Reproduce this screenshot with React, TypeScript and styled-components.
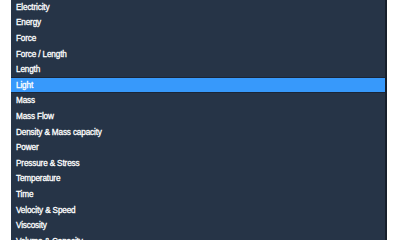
import styled, { createGlobalStyle } from "styled-components";

const GlobalStyle = createGlobalStyle`
  html, body {
    margin: 0;
    padding: 0;
    background: #ffffff;
    overflow: hidden;
  }
`;

const Page = styled.div`
  width: 400px;
  height: 240px;
  padding-left: 11px;
  box-sizing: border-box;
  display: flex;
  overflow: hidden;
`;

const ListPanel = styled.ul`
  list-style: none;
  margin: -1px 0 0;
  padding: 0;
  width: 376px;
  height: 242px;
  background: #263447;
  border-right: 2px solid #161f2b;
  box-sizing: border-box;
  overflow: hidden;
`;

const Item = styled.li<{ $active?: boolean }>`
  height: 15.6px;
  display: flex;
  align-items: center;
  padding: 1px 0 0 5px;
  box-sizing: border-box;
  font-family: "Liberation Sans", Arial, sans-serif;
  font-size: 8.2px;
  letter-spacing: -0.15px;
  font-weight: 400;
  -webkit-text-stroke: 0.3px #ffffff;
  color: #ffffff;
  white-space: nowrap;
  background: ${(p) => (p.$active ? "#3799fb" : "transparent")};
  box-shadow: ${(p) =>
    p.$active ? "inset 0 1px 0 #1a2638, inset 0 -1px 0 #1a2638" : "none"};
`;

const units = [
  "Electricity",
  "Energy",
  "Force",
  "Force / Length",
  "Length",
  "Light",
  "Mass",
  "Mass Flow",
  "Density & Mass capacity",
  "Power",
  "Pressure & Stress",
  "Temperature",
  "Time",
  "Velocity & Speed",
  "Viscosity",
  "Volume & Capacity",
];

export default function App() {
  return (
    <>
      <GlobalStyle />
      <Page>
        <ListPanel>
          {units.map((u) => (
            <Item key={u} $active={u === "Light"}>
              {u}
            </Item>
          ))}
        </ListPanel>
      </Page>
    </>
  );
}
